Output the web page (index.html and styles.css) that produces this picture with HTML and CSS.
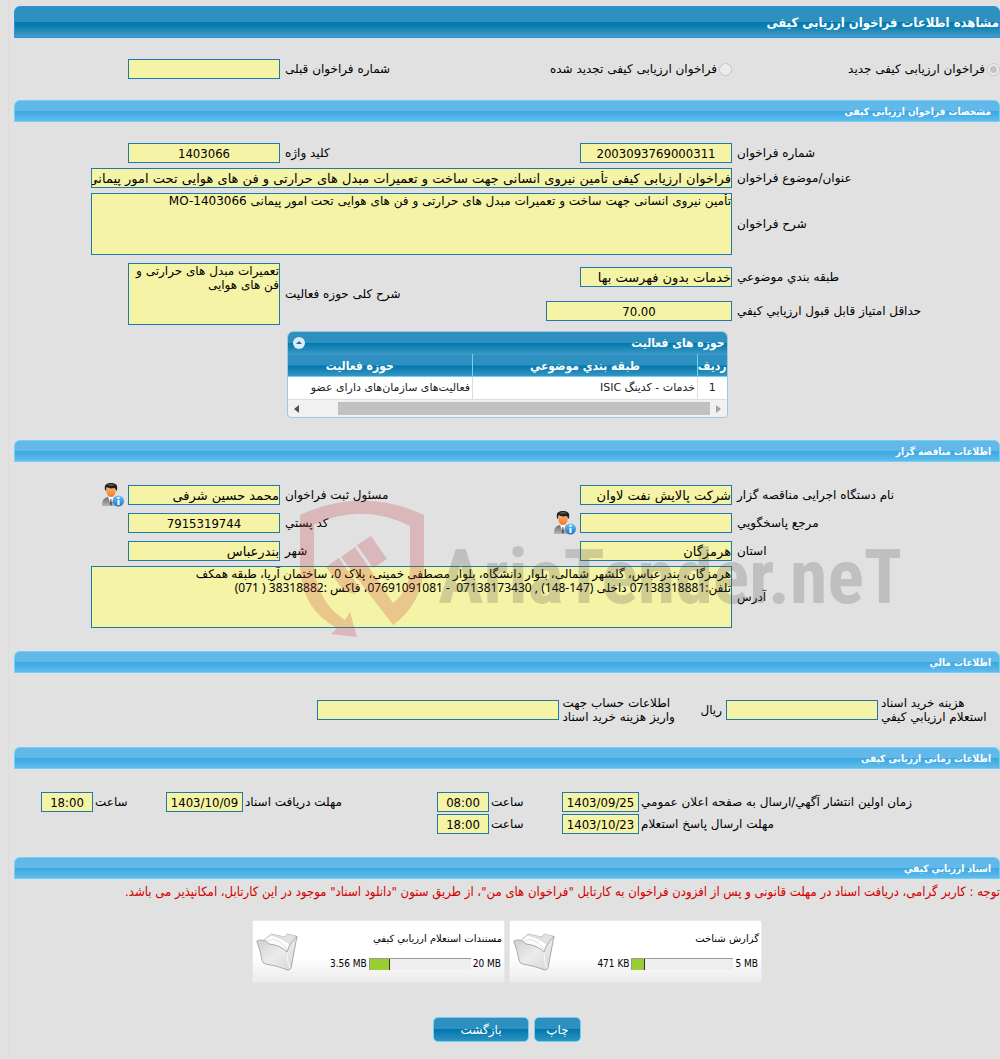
FILE: index.html
```html
<!DOCTYPE html>
<html lang="fa" dir="rtl">
<head>
<meta charset="utf-8">
<title>مشاهده اطلاعات فراخوان ارزیابی کیفی</title>
<link rel="stylesheet" href="styles.css">
</head>
<body>
<svg class="defs" aria-hidden="true">
  <defs>
    <linearGradient id="suit" x1="0" y1="0" x2="0" y2="1"><stop offset="0" stop-color="#6d6d6d"/><stop offset="1" stop-color="#b5b5b5"/></linearGradient>
    <linearGradient id="skin" x1="0" y1="0" x2="0" y2="1"><stop offset="0" stop-color="#ffb56b"/><stop offset="1" stop-color="#ee7a2c"/></linearGradient>
    <linearGradient id="info" x1="0" y1="0" x2="0" y2="1"><stop offset="0" stop-color="#6cc4f5"/><stop offset="1" stop-color="#1a75cf"/></linearGradient>
    <linearGradient id="flap" x1="0" y1="0" x2="1" y2="1"><stop offset="0" stop-color="#cccccc"/><stop offset="0.5" stop-color="#ebebeb"/><stop offset="1" stop-color="#d6d6d6"/></linearGradient>
    <symbol id="user" viewBox="0 0 22 24">
      <path d="M0 23c0-5 1-8 6-9h6c4 1 5 4 5 9z" fill="url(#suit)"/>
      <path d="M6 14l3 8 3-8z" fill="#f6f6f6"/>
      <path d="M8.500 16l-.7 5 1.200 2 1-2-.7-5z" fill="#555"/>
      <path d="M4 5c0 6 2 9 5 9s5-3 5-9c-2-2-8-2-10 0z" fill="url(#skin)"/>
      <path d="M3 7c-1-5 1-7 6-7s7 2 6 7l-1 1c0-2-1-3-2-3-3 1-6 0-7-1-1 1-1 2-1 4z" fill="#222"/>
      <path d="M5 2c2-1.500 6-1.500 8 0-2 1-6 1-8 0z" fill="#555"/>
      <circle cx="16.500" cy="18" r="5.500" fill="url(#info)"/>
      <path d="M15.500 14h2v2h-2zM15.500 17h2v5h-2z" fill="#fff"/>
    </symbol>
    <symbol id="folder" viewBox="0 0 42 40">
      <path d="M8 8L15 2l14 3 2-3 9 2q1 1 0 3l-6 29-4 2z" fill="#e2e2e2" stroke="#c8c8c8"/>
      <path d="M8 9l7-6q10 3 16 7l3 3-3 8z" fill="#fff" stroke="#dcdcdc"/>
      <path d="M9 10l9-3q8 3 12 8v5z" fill="#fafafa" stroke="#e2e2e2"/>
      <path d="M1 10q-1-2 5-2 5 1 7 4 11 1 18 8 2-7 5-10l5-6-6 32q-1 2-3 2-10-4-22-6-3 0-4-4Q4 17 1 10z" fill="url(#flap)" stroke="#ababab"/>
      <path d="M31 21q0 9 3 15" fill="none" stroke="#f8f8f8"/>
    </symbol>
  </defs>
</svg>
<main class="page">
  <h1 class="title">مشاهده اطلاعات فراخوان ارزیابی کیفی</h1>
  <form>
  <section>
    <div class="grid kind">
      <label class="choice"><input type="radio" name="kind" checked disabled>فراخوان ارزیابی کیفی جدید</label>
      <label class="choice"><input type="radio" name="kind" disabled>فراخوان ارزیابی کیفی تجدید شده</label>
      <label class="lab" for="prev">شماره فراخوان قبلی</label>
      <div class="cell"><input class="box" id="prev" readonly></div>
    </div>
  </section>

  <section>
    <h2 class="bar">مشخصات فراخوان ارزیابی کیفی</h2>
    <div class="grid rows">
      <label class="lab" for="num">شماره فراخوان</label>
      <div class="cell"><input class="box num" id="num" value="2003093769000311" readonly></div>
      <label class="lab" for="key">کلید واژه</label>
      <div class="cell"><input class="box num" id="key" value="1403066" readonly></div>
      <label class="lab" for="subject">عنوان/موضوع فراخوان</label>
      <input class="box full" id="subject" value="فراخوان ارزیابی کیفی تأمین نیروی انسانی جهت ساخت و تعمیرات مبدل های حرارتی و فن های هوایی تحت امور پیمانی" readonly>
      <label class="lab" for="desc">شرح فراخوان</label>
      <textarea class="box area full" id="desc" readonly>تأمین نیروی انسانی جهت ساخت و تعمیرات مبدل های حرارتی و فن های هوایی تحت امور پیمانی MO-1403066</textarea>
    </div>
    <div class="grid scope">
      <label class="lab" for="class">طبقه بندي موضوعي</label>
      <div class="cell"><input class="box" id="class" value="خدمات بدون فهرست بها" readonly></div>
      <label class="lab tall" for="field">شرح کلی حوزه فعالیت</label>
      <div class="cell tall"><textarea class="box area" id="field" readonly>تعمیرات مبدل های حرارتی و فن های هوایی</textarea></div>
      <label class="lab" for="score">حداقل امتیاز قابل قبول ارزیابي کیفي</label>
      <div class="cell"><input class="box num wide" id="score" value="70.00" readonly></div>
    </div>
    <div class="panel">
      <div class="caption"><span>حوزه های فعالیت</span>
        <button type="button" class="fold" aria-label="بستن"><svg viewBox="0 0 12 12"><circle cx="6" cy="6" r="6" fill="#dcebf6"/><path d="M3 7l3-3 3 3z" fill="#1d6fa5"/></svg></button>
      </div>
      <table>
        <thead><tr><th class="c1">ردیف</th><th class="c2">طبقه بندي موضوعي</th><th class="c3">حوزه فعالیت</th></tr></thead>
        <tbody><tr><td class="mid">1</td><td>خدمات - کدینگ ISIC</td><td>فعالیت‌های سازمان‌های دارای عضو</td></tr></tbody>
      </table>
      <div class="scroll"><i class="arrow right"></i><i class="thumb"></i><i class="arrow left"></i></div>
    </div>
  </section>

  <section class="owner">
    <h2 class="bar">اطلاعات مناقصه گزار</h2>
    <div class="grid org">
      <label class="lab" for="org">نام دستگاه اجرایی مناقصه گزار</label>
      <div class="cell"><input class="box" id="org" value="شرکت پالایش نفت لاوان" readonly></div>
      <label class="lab" for="resp">مسئول ثبت فراخوان</label>
      <div class="cell"><input class="box" id="resp" value="محمد حسین شرفی" readonly><svg class="user"><use href="#user"/></svg></div>
      <label class="lab" for="ref">مرجع پاسخگويي</label>
      <div class="cell"><input class="box" id="ref" readonly><svg class="user"><use href="#user"/></svg></div>
      <label class="lab" for="post">کد پستي</label>
      <div class="cell"><input class="box num" id="post" value="7915319744" readonly></div>
      <label class="lab" for="prov">استان</label>
      <div class="cell"><input class="box" id="prov" value="هرمزگان" readonly></div>
      <label class="lab" for="city">شهر</label>
      <div class="cell"><input class="box" id="city" value="بندرعباس" readonly></div>
    </div>
    <div class="grid address">
      <label class="lab" for="addr">آدرس</label>
      <textarea class="box area digits full" id="addr" readonly>هرمزگان، بندرعباس، گلشهر شمالی، بلوار دانشگاه، بلوار مصطفی خمینی، پلاک 0، ساختمان آریا، طبقه همکف
تلفن:07138318881 داخلی (147-148) , 07138173430  - 07691091081، فاکس :38318882 ( 071)</textarea>
    </div>
    <svg class="mark" viewBox="0 0 600 140" direction="ltr" aria-hidden="true">
      <g fill="#c3353f" fill-opacity=".24">
        <path d="M0 15Q62-14 124 15V67Q122 104 93 125L41 57 55 47 93 103Q110 90 110 67V26Q62 2 14 25V67Q18 103 45 120L50 112 57 137 31 134 37 128Q2 110 0 67Z"/>
        <path d="M57 45L71 36 87 59 73 68Z"/>
        <path d="M26 67L39 58 59 87 55 94 44 91Z"/>
      </g>
      <text x="138" y="103" class="brand">AriaTender.neT</text>
    </svg>
  </section>

  <section>
    <h2 class="bar">اطلاعات مالي</h2>
    <div class="money">
      <label class="two" for="fee">هزینه خرید اسناد<br>استعلام ارزیابي کیفي</label>
      <input class="box" id="fee" readonly><span class="unit">ریال</span>
      <label class="two account" for="acc">اطلاعات حساب جهت<br>واریز هزینه خرید اسناد</label>
      <input class="box long" id="acc" readonly>
    </div>
  </section>

  <section>
    <h2 class="bar">اطلاعات زمانی ارزیابی کیفی</h2>
    <div class="times">
      <label class="lab" for="d1">زمان اولین انتشار آگهي/ارسال به صفحه اعلان عمومي</label><input class="box num" id="d1" value="1403/09/25" readonly>
      <label class="lab" for="t1">ساعت</label><input class="box num" id="t1" value="08:00" readonly>
      <label class="lab" for="d2">مهلت دریافت اسناد</label><input class="box num" id="d2" value="1403/10/09" readonly>
      <label class="lab" for="t2">ساعت</label><input class="box num" id="t2" value="18:00" readonly>
      <label class="lab" for="d3">مهلت ارسال پاسخ استعلام</label><input class="box num" id="d3" value="1403/10/23" readonly>
      <label class="lab" for="t3">ساعت</label><input class="box num" id="t3" value="18:00" readonly>
    </div>
  </section>

  <section>
    <h2 class="bar">اسناد ارزیابي کیفي</h2>
    <p class="note">توجه : کاربر گرامی، دریافت اسناد در مهلت قانونی و پس از افزودن فراخوان به کارتابل "فراخوان های من"، از طریق ستون "دانلود اسناد" موجود در این کارتابل، امکانپذیر می باشد.</p>
    <div class="files">
      <div class="file">
        <div class="info"><span>گزارش شناخت</span>
          <div class="size"><span dir="ltr">5 MB</span><div class="track"><div class="fill" style="width:12%"></div></div><span dir="ltr">471 KB</span></div></div>
        <svg class="folder"><use href="#folder"/></svg>
      </div>
      <div class="file">
        <div class="info"><span>مستندات استعلام ارزیابي کیفي</span>
          <div class="size"><span dir="ltr">20 MB</span><div class="track"><div class="fill" style="width:20%"></div></div><span dir="ltr">3.56 MB</span></div></div>
        <svg class="folder"><use href="#folder"/></svg>
      </div>
    </div>
  </section>
  <div class="actions">
    <button type="button">چاپ</button>
    <button type="button" class="back">بازگشت</button>
  </div>
  </form>
</main>
</body>
</html>
```
FILE: styles.css
```css
* { box-sizing: border-box; }
body {
  margin: 0;
  background: #e1e1e1;
  color: #000;
  font: 12px/14px "DejaVu Sans", sans-serif;
}
.defs { position: absolute; width: 0; height: 0; }
.page {
  margin-left: 8px;
  padding: 6px 0 16px 5px;
  border-left: 1px solid #dcdcdc;
}
.title, .bar { margin: 0; color: #fff; font-family: "DejaVu Sans Condensed", sans-serif; font-weight: bold; }
.title {
  height: 32px;
  border: 1px solid #2f90dd;
  border-radius: 6px 6px 0 0;
  background: linear-gradient(#2e90bf 0 50%, #0078ae 50%, #0a80b2 65%, #479dc5);
  font-size: 13px;
  line-height: 32px;
}
.bar {
  height: 22px;
  padding-right: 8px;
  border: 1px solid #6fd1f5;
  border-radius: 6px 6px 0 0;
  background: linear-gradient(#62b9e9 0 50%, #39a7e2 50%, #62bcec);
  font-size: 10px;
  line-height: 22px;
}
.grid {
  display: grid;
  grid-template-columns: 268px 186px 1fr 266px;
  align-items: center;
}
.kind { height: 62px; }
.rows { row-gap: 5px; padding-top: 21px; }
.scope { grid-template-rows: 34px 34px; padding-top: 5px; }
.org { row-gap: 8px; padding-top: 23px; }
.address { padding-top: 5px; }
.lab { padding-left: 5px; text-align: left; white-space: nowrap; }
.full { grid-column: 2 / -1; }
.scope .tall { grid-row: 1 / 3; }
.lab.tall { grid-column: 3; }
.cell.tall { grid-column: 4; }
.cell { display: flex; align-items: center; gap: 4px; height: 20px; }
.cell.tall { height: auto; }
.choice { display: flex; align-items: center; gap: 2px; white-space: nowrap; }
.choice input {
  display: grid;
  place-items: center;
  appearance: none;
  width: 13px;
  height: 13px;
  margin: 0;
  border: 1px solid #c6c6c6;
  border-radius: 50%;
  background: #ececec;
}
.choice input:checked::before {
  content: "";
  width: 7px;
  height: 7px;
  border-radius: 50%;
  background: #c4c4c4;
}
.box {
  width: 152px;
  height: 20px;
  margin: 0;
  padding: 0;
  border: 1px solid #2179ab;
  border-radius: 0;
  outline: 0;
  background: #f5f3a5;
  color: #000;
  font: 13px "DejaVu Sans", sans-serif;
}
.box.full { width: calc(100% - 77px); }
.box.num { font-family: "DejaVu Sans Condensed", sans-serif; text-align: center; direction: ltr; }
.box.wide { width: 186px; }
.box.area { display: block; height: 62px; font-size: 12px; line-height: 14px; resize: none; overflow: hidden; }
.box.digits { font-family: "Noto Sans", "DejaVu Sans", sans-serif; }
.user { width: 22px; height: 24px; flex: none; }

.panel {
  width: 441px;
  margin: 3px auto 0;
  border: 1px solid #9cc8e6;
  border-radius: 6px 6px 4px 4px;
  background: #f1f1f1;
  overflow: hidden;
}
.caption, th {
  background: linear-gradient(#2e90bf 0 50%, #0078ae 50%, #3a97c3);
  color: #fff;
  font-family: "DejaVu Sans Condensed", sans-serif;
  font-weight: bold;
}
.caption { display: flex; justify-content: space-between; align-items: center; height: 22px; padding: 0 2px 0 5px; }
.fold { width: 12px; height: 12px; padding: 0; border: 0; background: none; }
.fold svg { display: block; }
table { width: 100%; table-layout: fixed; border-collapse: collapse; }
th { height: 22px; padding: 0; border-left: 1px solid #6fd1f5; border-bottom: 1px solid #6fd1f5; border-top: 1px solid #3a95d2; font-size: 12px; }
th:last-child, td:last-child { border-left: 0; }
.c1 { width: 29px; }
.c2 { width: 225px; }
.c3 { padding-right: 40px; }
td { height: 23px; padding: 0 2px; border-left: 1px solid #ddd; border-bottom: 1px solid #ddd; background: #fff; color: #222; font-size: 11px; white-space: nowrap; }
.mid { text-align: center; }
.scroll { display: flex; align-items: center; justify-content: space-between; height: 17px; padding: 0 6px; }
.thumb { width: 372px; height: 13px; margin-left: auto; margin-right: 6px; background: #c1c1c1; }
.arrow { border: 4px solid transparent; }
.arrow.right { border-right: 0; border-left: 5px solid #a3a3a3; }
.arrow.left { border-left: 0; border-right: 5px solid #505050; }

.owner { position: relative; margin-top: 22px; }
.mark { position: absolute; top: 60px; left: 286px; width: 600px; height: 140px; pointer-events: none; }
.brand { fill: #505050; fill-opacity: .23; font: bold 76px "Roboto Condensed", sans-serif; }

.owner + section { margin-top: 23px; }
.money { display: flex; align-items: center; height: 74px; }
.two { flex: 0 0 122px; padding-left: 3px; text-align: left; white-space: nowrap; }
.unit { padding-right: 4px; }
.account { flex-basis: 141px; }
.money .long { width: 242px; }
.times {
  display: grid;
  grid-template-columns: 361px 77px 73px 52px 1fr 77px 73px 52px;
  gap: 2px 0;
  align-items: center;
  padding: 23px 0 23px 27px;
}
.times .lab { padding-left: 2px; }
.times .box { width: 100%; }
.note { margin: 5px 0 0; color: #d40000; font: 13px/16px "DejaVu Sans Condensed", sans-serif; white-space: nowrap; }
.files { display: flex; justify-content: center; gap: 4px; margin-top: 20px; }
.file {
  display: flex;
  justify-content: space-between;
  width: 253px;
  height: 63px;
  padding: 11px 2px 0 3px;
  border: 1px solid #e9e9e9;
  border-radius: 2px;
  background: linear-gradient(#fff 0 60%, #ebebeb);
  font-size: 10px;
}
.info { display: flex; flex-direction: column; gap: 11px; }
.size { display: flex; align-items: center; gap: 2px; padding-right: 1px; font-family: "DejaVu Sans Condensed", sans-serif; }
.track { direction: ltr; width: 102px; height: 12px; border-top: 1px solid #999; border-left: 1px solid #999; background: #eee; }
.fill { height: 100%; border-right: 1px solid #333; background: #9acd32; }
.folder { width: 42px; height: 40px; }
.actions { display: flex; justify-content: center; gap: 5px; margin-top: 34px; }
.actions button {
  width: 47px;
  height: 25px;
  padding: 0;
  border: 1px solid #6fd1f5;
  border-radius: 5px;
  background: linear-gradient(#2e90bf 0 50%, #0078ae 50%, #2f92c0);
  color: #fff;
  font: 12px "DejaVu Sans", sans-serif;
}
.actions .back { width: 96px; }
```
